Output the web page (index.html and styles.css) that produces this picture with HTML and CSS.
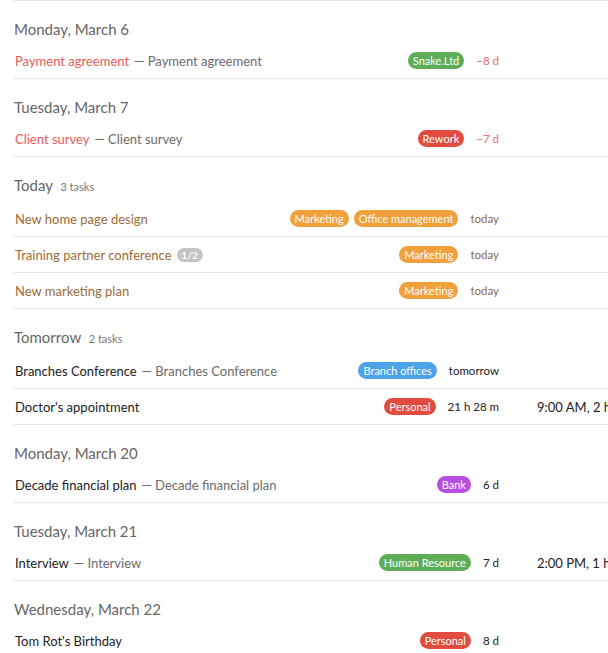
FILE: index.html
```html
<!DOCTYPE html>
<html lang="en">
<head>
  <meta charset="UTF-8" />
  <title>Agenda</title>
  <link rel="stylesheet" href="styles.css">
</head>
<body>
  <div class="agenda">

    <section class="day">
      <h2 class="day-title">Monday, March 6</h2>
      <div class="task overdue">
        <div class="task-title"><span class="name">Payment agreement</span><span class="note">— Payment agreement</span></div>
        <div class="tags"><span class="tag green">Snake.Ltd</span></div>
        <div class="due">−8 d</div>
        <div class="time"></div>
      </div>
    </section>

    <section class="day">
      <h2 class="day-title">Tuesday, March 7</h2>
      <div class="task overdue">
        <div class="task-title"><span class="name">Client survey</span><span class="note">— Client survey</span></div>
        <div class="tags"><span class="tag red">Rework</span></div>
        <div class="due">−7 d</div>
        <div class="time"></div>
      </div>
    </section>

    <section class="day">
      <h2 class="day-title">Today <span class="count">3 tasks</span></h2>
      <div class="task today">
        <div class="task-title"><span class="name">New home page design</span></div>
        <div class="tags"><span class="tag orange">Marketing</span><span class="tag orange">Office management</span></div>
        <div class="due">today</div>
        <div class="time"></div>
      </div>
      <div class="task today">
        <div class="task-title"><span class="name">Training partner conference</span><span class="sub">1/2</span></div>
        <div class="tags"><span class="tag orange">Marketing</span></div>
        <div class="due">today</div>
        <div class="time"></div>
      </div>
      <div class="task today">
        <div class="task-title"><span class="name">New marketing plan</span></div>
        <div class="tags"><span class="tag orange">Marketing</span></div>
        <div class="due">today</div>
        <div class="time"></div>
      </div>
    </section>

    <section class="day">
      <h2 class="day-title">Tomorrow <span class="count">2 tasks</span></h2>
      <div class="task">
        <div class="task-title"><span class="name">Branches Conference</span><span class="note">— Branches Conference</span></div>
        <div class="tags"><span class="tag blue">Branch offices</span></div>
        <div class="due">tomorrow</div>
        <div class="time"></div>
      </div>
      <div class="task">
        <div class="task-title"><span class="name">Doctor's appointment</span></div>
        <div class="tags"><span class="tag red">Personal</span></div>
        <div class="due">21 h 28 m</div>
        <div class="time">9:00 AM, 2 h</div>
      </div>
    </section>

    <section class="day">
      <h2 class="day-title">Monday, March 20</h2>
      <div class="task">
        <div class="task-title"><span class="name">Decade financial plan</span><span class="note">— Decade financial plan</span></div>
        <div class="tags"><span class="tag purple">Bank</span></div>
        <div class="due">6 d</div>
        <div class="time"></div>
      </div>
    </section>

    <section class="day">
      <h2 class="day-title">Tuesday, March 21</h2>
      <div class="task">
        <div class="task-title"><span class="name">Interview</span><span class="note">— Interview</span></div>
        <div class="tags"><span class="tag green">Human Resource</span></div>
        <div class="due">7 d</div>
        <div class="time">2:00 PM, 1 h</div>
      </div>
    </section>

    <section class="day">
      <h2 class="day-title">Wednesday, March 22</h2>
      <div class="task">
        <div class="task-title"><span class="name">Tom Rot's Birthday</span></div>
        <div class="tags"><span class="tag red">Personal</span></div>
        <div class="due">8 d</div>
        <div class="time"></div>
      </div>
    </section>

  </div>
</body>
</html>
```

FILE: styles.css
```css
body {
  margin: 0;
  overflow: hidden;
  background: #fff;
  font-family: Lato, "Open Sans", sans-serif;
  color: #222;
}

.agenda {
  width: 674px;
  margin-left: 13px;
  border-top: 1px solid #e8e8e8;
}

.day-title {
  margin: 0;
  padding: 18px 0 4px 1px;
  font-size: 15px;
  line-height: 20px;
  font-weight: normal;
  color: #666;
}

.day-title .count {
  margin-left: 4px;
  font-size: 11px;
  color: #777;
}

.task {
  display: flex;
  align-items: center;
  height: 35px;
  border-bottom: 1px solid #e8e8e8;
  font-size: 13px;
}

.task-title {
  flex: 1;
  padding-left: 2px;
  white-space: nowrap;
}

.task-title .note {
  margin-left: 5px;
  color: #6b6b6b;
}

.task.overdue .name { color: #e85a57; }
.task.today .name { color: #9d6c36; }

.sub {
  display: inline-block;
  margin-left: 5px;
  padding: 0 5px;
  height: 14px;
  line-height: 14px;
  border-radius: 7px;
  background: #c4c4c4;
  color: #fff;
  font-size: 10px;
  font-weight: bold;
  vertical-align: 1px;
}

.tags {
  display: flex;
  gap: 5px;
}

.tag {
  display: inline-block;
  height: 17px;
  line-height: 17px;
  padding: 0 5px;
  border-radius: 9px;
  font-size: 11px;
  color: #fff;
}

.tag.green { background: #5dad56; }
.tag.red { background: #e14c3e; }
.tag.orange { background: #f2a03b; }
.tag.blue { background: #4ba3ea; }
.tag.purple { background: #b74ee0; }

.due {
  margin-left: 12px;
  white-space: nowrap;
  font-size: 11.5px;
}

.task.overdue .due { color: #ec6a6e; }
.task.today .due { color: #8a6a4a; }

.time {
  width: 150px;
  padding-left: 38px;
  white-space: nowrap;
  font-size: 13px;
  color: #222;
}
```
